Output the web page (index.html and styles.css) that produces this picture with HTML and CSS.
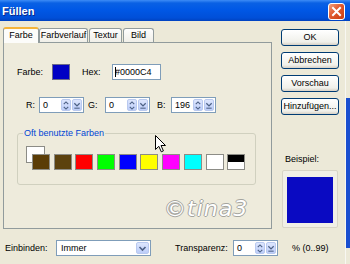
FILE: index.html
```html
<!DOCTYPE html>
<html lang="de">
<head>
    <meta charset="UTF-8">
    <title>Füllen</title>
    <link rel="stylesheet" href="styles.css">
</head>
<body>
<div class="window">
    <div class="titlebar">
        <span class="title">Füllen</span>
        <span class="close">
            <svg width="17" height="17" viewBox="0 0 17 17">
                <path d="M5 5 L12 12 M12 5 L5 12" stroke="#fff" stroke-width="2" stroke-linecap="square"/>
            </svg>
        </span>
    </div>

    <div class="frame">
        <div class="main">
            <div class="content">
                <div class="left">
                    <div class="tabs">
                        <div class="tab active">Farbe</div>
                        <div class="tab tab-verlauf">Farbverlauf</div>
                        <div class="tab tab-textur">Textur</div>
                        <div class="tab tab-bild">Bild</div>
                    </div>
                    <div class="panel">
                        <div class="row row-color">
                            <span class="lbl lbl-farbe">Farbe:</span>
                            <span class="current"></span>
                            <span class="lbl lbl-hex">Hex:</span>
                            <span class="field hex"><span class="caret"></span>#0000C4</span>
                        </div>

                        <div class="row row-rgb">
                            <span class="lbl lbl-r">R:</span>
                            <span class="field spin">
                                <span class="val">0</span>
                                <span class="spin-btn"><svg width="9" height="11" viewBox="0 0 9 11"><path d="M2 4 L4.5 1.5 L7 4 M2 7 L4.5 9.5 L7 7" fill="none" stroke="#4d6185" stroke-width="1.3"/></svg></span>
                                <span class="pop-btn"><svg width="9" height="11" viewBox="0 0 9 11"><path d="M1.5 3 L4.5 6 L7.5 3" fill="none" stroke="#4d6185" stroke-width="1.4"/><path d="M1.5 8.5 H7.5" stroke="#4d6185" stroke-width="1.2"/></svg></span>
                            </span>
                            <span class="lbl lbl-g">G:</span>
                            <span class="field spin">
                                <span class="val">0</span>
                                <span class="spin-btn"><svg width="9" height="11" viewBox="0 0 9 11"><path d="M2 4 L4.5 1.5 L7 4 M2 7 L4.5 9.5 L7 7" fill="none" stroke="#4d6185" stroke-width="1.3"/></svg></span>
                                <span class="pop-btn"><svg width="9" height="11" viewBox="0 0 9 11"><path d="M1.5 3 L4.5 6 L7.5 3" fill="none" stroke="#4d6185" stroke-width="1.4"/><path d="M1.5 8.5 H7.5" stroke="#4d6185" stroke-width="1.2"/></svg></span>
                            </span>
                            <span class="lbl lbl-b">B:</span>
                            <span class="field spin">
                                <span class="val">196</span>
                                <span class="spin-btn"><svg width="9" height="11" viewBox="0 0 9 11"><path d="M2 4 L4.5 1.5 L7 4 M2 7 L4.5 9.5 L7 7" fill="none" stroke="#4d6185" stroke-width="1.3"/></svg></span>
                                <span class="pop-btn"><svg width="9" height="11" viewBox="0 0 9 11"><path d="M1.5 3 L4.5 6 L7.5 3" fill="none" stroke="#4d6185" stroke-width="1.4"/><path d="M1.5 8.5 H7.5" stroke="#4d6185" stroke-width="1.2"/></svg></span>
                            </span>
                        </div>

                        <fieldset class="group">
                            <legend>Oft benutzte Farben</legend>
                            <div class="swatches">
                                <span class="swatch selected" style="background:#5a3c06"></span>
                                <span class="swatch" style="background:#5c420e"></span>
                                <span class="swatch" style="background:#ff0000"></span>
                                <span class="swatch" style="background:#00ff00"></span>
                                <span class="swatch" style="background:#0000ff"></span>
                                <span class="swatch" style="background:#ffff00"></span>
                                <span class="swatch" style="background:#ff00ff"></span>
                                <span class="swatch" style="background:#00ffff"></span>
                                <span class="swatch" style="background:#ffffff"></span>
                                <span class="swatch split"></span>
                            </div>
                        </fieldset>

                        <div class="watermark">©tina3</div>
                        <svg class="cursor" width="12" height="18" viewBox="0 0 12 18">
                            <path d="M0.5 0.5 L0.5 14.5 L3.8 11.3 L6.3 16.8 L8.4 15.9 L6 10.5 L10.5 10.5 Z" fill="#fff" stroke="#000" stroke-width="1"/>
                        </svg>
                    </div>
                </div>

                <div class="side">
                    <div class="btn">OK</div>
                    <div class="btn">Abbrechen</div>
                    <div class="btn">Vorschau</div>
                    <div class="btn">Hinzufügen...</div>
                    <div class="sample-label">Beispiel:</div>
                    <div class="sample"><div class="sample-fill"></div></div>
                </div>
            </div>

            <div class="bottom">
                <span class="lbl lbl-einbinden">Einbinden:</span>
                <span class="field select">
                    <span class="val">Immer</span>
                    <span class="drop-btn"><svg width="9" height="9" viewBox="0 0 9 9"><path d="M1.5 3 L4.5 6 L7.5 3" fill="none" stroke="#4d6185" stroke-width="1.6"/></svg></span>
                </span>
                <span class="lbl lbl-transparenz">Transparenz:</span>
                <span class="field spin">
                    <span class="val">0</span>
                    <span class="spin-btn"><svg width="9" height="11" viewBox="0 0 9 11"><path d="M2 4 L4.5 1.5 L7 4 M2 7 L4.5 9.5 L7 7" fill="none" stroke="#4d6185" stroke-width="1.3"/></svg></span>
                    <span class="pop-btn"><svg width="9" height="11" viewBox="0 0 9 11"><path d="M1.5 3 L4.5 6 L7.5 3" fill="none" stroke="#4d6185" stroke-width="1.4"/><path d="M1.5 8.5 H7.5" stroke="#4d6185" stroke-width="1.2"/></svg></span>
                </span>
                <span class="lbl lbl-range">% (0..99)</span>
            </div>
        </div>
        <div class="edge"><div class="edge-blue"></div></div>
    </div>
</div>
</body>
</html>
```

FILE: styles.css
```css
body {
    margin: 0;
    width: 350px;
    height: 264px;
    overflow: hidden;
    background-color: #ece9d8;
    font-family: "Liberation Sans", Arial, sans-serif;
    font-size: 9px;
    color: #000;
}
.window {
    width: 350px;
    height: 264px;
}
.titlebar {
    height: 21px;
    display: flex;
    align-items: center;
    justify-content: space-between;
    padding: 0 5px 0 2px;
    background: linear-gradient(#3d8cf6 0, #0a61e4 3px, #0058e6 45%, #004fd8 85%, #0042c0 100%);
}
.title {
    color: #fff;
    font-weight: bold;
    font-size: 11px;
    text-shadow: 1px 1px 0 #0a2a8c;
}
.close {
    width: 17px;
    height: 17px;
    margin-top: 1px;
    box-sizing: border-box;
    border: 1px solid #fff;
    border-radius: 3px;
    background: linear-gradient(135deg, #f0a080 0, #e0592e 45%, #c83c10 100%);
    display: flex;
}
.close svg {
    margin: -1px;
}
.frame {
    display: flex;
    height: 243px;
}
.main {
    width: 345px;
    border-right: 1px solid #f8f7f2;
}
.edge {
    width: 4px;
}
.edge-blue {
    margin-top: 77px;
    height: 150px;
    background: #1a4fd0;
}
.content {
    display: flex;
    padding: 6px 0 0 3px;
}
.left {
    width: 269px;
}
.tabs {
    display: flex;
    align-items: flex-end;
    height: 15px;
    position: relative;
    z-index: 1;
}
.tab {
    height: 14px;
    box-sizing: border-box;
    border: 1px solid #919b9c;
    border-bottom: none;
    border-radius: 3px 3px 0 0;
    background: linear-gradient(#fefefe, #f0efe8);
    text-align: center;
    line-height: 13px;
}
.tab.active {
    width: 36px;
    height: 16px;
    margin-bottom: -1px;
    border-top: 2px solid #f5b43a;
    background: #fcfcfa;
    line-height: 13px;
}
.tab-verlauf { width: 49px; }
.tab-textur { width: 33px; margin-left: 1px; }
.tab-bild { width: 31px; margin-left: 1px; }
.panel {
    position: relative;
    height: 187px;
    box-sizing: border-box;
    border: 1px solid #919b9c;
    padding: 21px 0 0 13px;
    background: #eeebdc;
}
.row {
    display: flex;
    align-items: center;
    height: 16px;
}
.lbl {
    white-space: nowrap;
}
.lbl-farbe { width: 35px; }
.current {
    width: 18px;
    height: 16px;
    box-sizing: border-box;
    border: 1px solid #6b6b8a;
    background: #0000c4;
    margin-right: 12px;
}
.lbl-hex { width: 30px; }
.field {
    height: 16px;
    box-sizing: border-box;
    border: 1px solid #7f9db9;
    background: #fff;
    display: flex;
    align-items: center;
}
.hex {
    width: 49px;
    padding-left: 2px;
}
.caret {
    width: 1px;
    height: 10px;
    background: #000;
    margin-right: -1px;
}
.row-rgb {
    margin-top: 17px;
    padding-left: 9px;
}
.lbl-r { width: 13px; }
.lbl-g { width: 17px; margin-left: 4px; }
.lbl-b { width: 14px; margin-left: 7px; }
.spin {
    width: 45px;
    padding: 1px;
}
.spin .val {
    flex: 1;
    padding-left: 2px;
}
.spin-btn, .pop-btn, .drop-btn {
    height: 12px;
    width: 10px;
    box-sizing: border-box;
    border: 1px solid #b9c9ef;
    border-radius: 2px;
    background: linear-gradient(#dde6fd, #bccdf9);
    display: flex;
    align-items: center;
    justify-content: center;
}
.pop-btn {
    margin-left: 1px;
}
.group {
    margin: 14px 0 0 0;
    width: 239px;
    height: 58px;
    box-sizing: border-box;
    border: 1px solid #d0d0bf;
    border-radius: 3px;
    padding: 0 0 0 5px;
}
.group legend {
    padding: 0 1px;
    color: #0046d5;
    line-height: 13px;
}
.swatches {
    display: flex;
    gap: 3.7px;
    margin: 14px 0 0 9px;
    position: relative;
    z-index: 0;
}
.swatch {
    width: 18px;
    height: 16px;
    box-sizing: border-box;
    border: 1px solid #8c8c86;
}
.swatch.selected {
    position: relative;
}
.swatch.selected::before {
    content: "";
    position: absolute;
    left: -7px;
    top: -9px;
    width: 19px;
    height: 17px;
    box-sizing: border-box;
    border: 1px solid #8c8c86;
    background: #fff;
    z-index: -1;
}
.swatch.split {
    background: linear-gradient(#000 0, #000 50%, #fff 50%, #fff 100%);
}
.watermark {
    position: absolute;
    left: 160px;
    top: 153px;
    font-family: "DejaVu Sans", sans-serif;
    font-style: italic;
    font-size: 22px;
    letter-spacing: 1px;
    color: #fff;
    text-shadow: 1px 0 0 #a4a49e, -1px 0 0 #a4a49e, 0 1px 0 #a4a49e, 0 -1px 0 #a4a49e;
}
.cursor {
    position: absolute;
    left: 151px;
    top: 92px;
}
.side {
    width: 58px;
    margin-left: 9px;
    display: flex;
    flex-direction: column;
    padding-top: 2px;
}
.btn {
    height: 17px;
    margin-bottom: 6px;
    box-sizing: border-box;
    border: 1px solid #003c74;
    border-radius: 3px;
    background: linear-gradient(#ffffff, #f0f0ea 80%, #d6d0c5);
    text-align: center;
    line-height: 15px;
    white-space: nowrap;
}
.sample-label {
    margin: 32px 0 0 4px;
    line-height: 13px;
}
.sample {
    margin: 4px 0 0 1px;
    width: 56px;
    height: 58px;
    box-sizing: border-box;
    border: 1px solid #d8d4c6;
    border-radius: 2px;
    background: #f1efe6;
    padding: 6px 4px 4px 4px;
}
.sample-fill {
    height: 100%;
    background: #0a0ac2;
}
.bottom {
    display: flex;
    align-items: center;
    margin-top: 11px;
    padding-left: 5px;
    height: 16px;
}
.lbl-einbinden { width: 51px; }
.select {
    width: 95px;
    padding: 1px;
}
.select .val {
    flex: 1;
    padding-left: 3px;
}
.drop-btn {
    width: 13px;
    height: 12px;
}
.lbl-transparenz { width: 58px; margin-left: 24px; }
.lbl-range { margin-left: 14px; }
```
